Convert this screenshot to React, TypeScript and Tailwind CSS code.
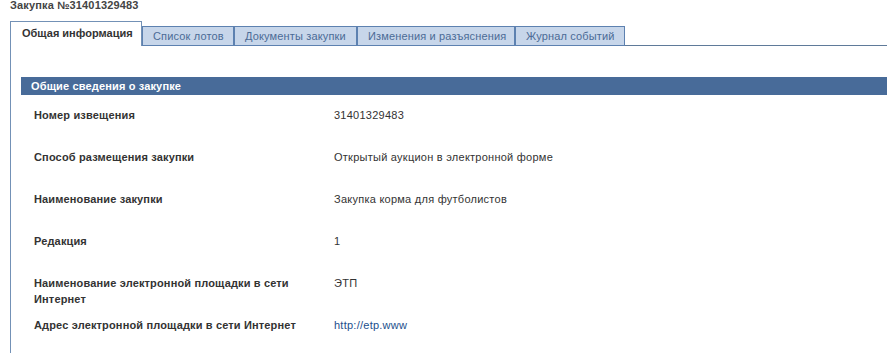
import React from "react";

const rows: { label: string; value: string; link?: boolean }[] = [
  { label: "Номер извещения", value: "31401329483" },
  { label: "Способ размещения закупки", value: "Открытый аукцион в электронной форме" },
  { label: "Наименование закупки", value: "Закупка корма для футболистов" },
  { label: "Редакция", value: "1" },
  { label: "Наименование электронной площадки в сети Интернет", value: "ЭТП" },
  { label: "Адрес электронной площадки в сети Интернет", value: "http://etp.www", link: true },
];

const tabs: { t: string; w: string }[] = [
  { t: "Список лотов", w: "w-[92px]" },
  { t: "Документы закупки", w: "w-[123px]" },
  { t: "Изменения и разъяснения", w: "w-[158px]" },
  { t: "Журнал событий", w: "w-[110px]" },
];

export default function App() {
  return (
    <div
      className="w-[887px] h-[353px] overflow-hidden bg-white text-[11px] text-[#333]"
      style={{ fontFamily: '"Liberation Sans", Arial, sans-serif' }}
    >
      <div className="h-[21px] pl-[10px]">
        <div className="leading-[11px] font-bold text-[#444] tracking-[0.15px]">Закупка №31401329483</div>
      </div>
      <div className="flex items-end pl-[10px] h-[25px]">
        <div className="h-[25px] w-[132px] border-l border-t border-r border-[#7391b6] bg-white pl-[11px] pt-[5px] leading-[13px] font-bold text-[#333]">
          Общая информация
        </div>
        {tabs.map((t) => (
          <div
            key={t.t}
            className={`${t.w} h-[20px] border border-[#5d81b0] bg-[#c7d6ea] pl-[10px] leading-[18px] text-[#4b6b96] tracking-[0.15px] whitespace-nowrap`}
          >
            {t.t}
          </div>
        ))}
        <div className="flex-1 h-[1px] bg-[#5f7a99]" />
      </div>
      <div className="ml-[10px] border-l border-[#7391b6] pl-[10px] pt-[31px] h-[400px]">
        <div className="h-[18px] bg-[#486b99] pl-[10px] leading-[18px] font-bold text-white tracking-[0.15px]">
          Общие сведения о закупке
        </div>
        <div className="pt-[12px]">
          {rows.map((r) => (
            <div key={r.label} className="flex h-[42px] leading-[16px]">
              <div className="w-[313px] shrink-0 pl-[13px] pr-[16px] font-bold text-[#333] tracking-[0.15px]">{r.label}</div>
              <div className={r.link ? "text-[#1c4f8c] tracking-[0.25px]" : "text-[#333] tracking-[0.25px]"}>{r.value}</div>
            </div>
          ))}
        </div>
      </div>
    </div>
  );
}
